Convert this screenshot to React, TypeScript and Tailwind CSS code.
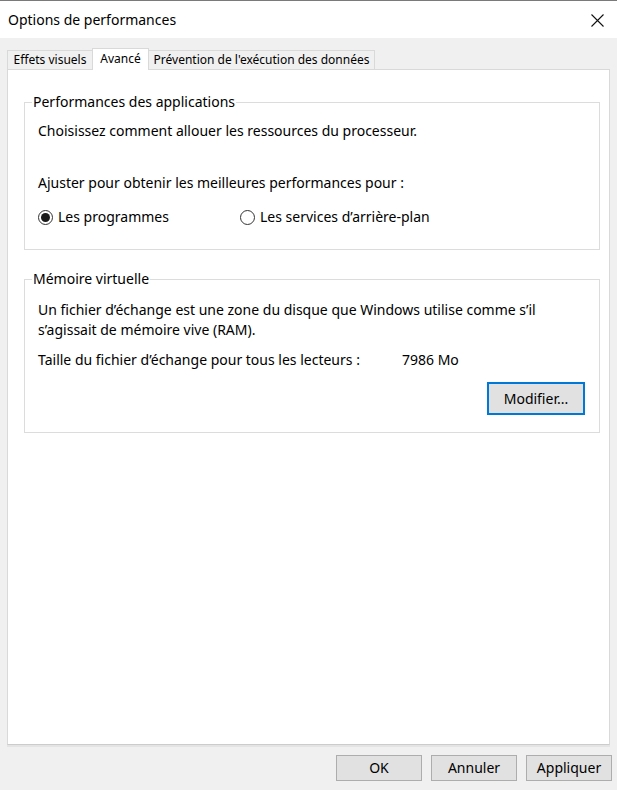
import React from "react";

const font = { fontFamily: '"Noto Sans", "Open Sans", Arial, sans-serif' };

function Radio({ checked, label }: { checked: boolean; label: string }) {
  return (
    <div className="flex items-center gap-[5px]">
      <span className="w-[15px] h-[15px] rounded-full border border-[#333333] bg-white flex items-center justify-center">
        {checked && <span className="w-[9px] h-[9px] rounded-full bg-[#1a1a1a]" />}
      </span>
      <span className="leading-[20px]">{label}</span>
    </div>
  );
}

export default function App() {
  return (
    <div
      className="w-[617px] h-[790px] bg-[#f0f0f0] border-t border-[#7a7a7a] flex flex-col text-[14px] text-black overflow-hidden"
      style={font}
    >
      {/* Title bar */}
      <div className="h-[37px] bg-white flex items-center justify-between pl-[8px] pr-[13px]">
        <span className="text-[14px] leading-[20px]">Options de performances</span>
        <svg width="13" height="13" viewBox="0 0 13 13" className="mt-[1px]">
          <path d="M0.5 0.5 L12.5 12.5 M12.5 0.5 L0.5 12.5" stroke="#111" strokeWidth="1.1" fill="none" />
        </svg>
      </div>

      {/* Tabs */}
      <div className="pt-[10px] pl-[7px] flex items-end h-[32px] -mb-px relative z-10 text-[12px]">
        <div className="w-[85px] h-[20px] border border-r-0 border-[#d9d9d9] bg-[#f0f0f0] flex items-center justify-center leading-[18px]">
          Effets visuels
        </div>
        <div className="w-[57px] h-[22px] border border-b-0 border-[#d9d9d9] bg-white flex items-start justify-center pt-[1px] leading-[18px]">
          Avancé
        </div>
        <div className="w-[226px] h-[20px] border border-l-0 border-[#d9d9d9] bg-[#f0f0f0] flex items-center justify-center leading-[18px]">
          Prévention de l'exécution des données
        </div>
      </div>

      {/* Panel */}
      <div className="mx-[7px] h-[676px] bg-white border border-[#d9d9d9] border-b-[#cccccc] shadow-[0_2px_0_#e4e4e4] pl-[16px]">
        <fieldset className="mt-[22px] w-[576px] border border-[#dcdcdc] pb-[22px]">
          <legend className="ml-[7px] px-[1px] leading-[20px]">Performances des applications</legend>
          <div className="pl-[13px]">
            <div className="pt-[9px] leading-[20px]">Choisissez comment allouer les ressources du processeur.</div>
            <div className="mt-[32px] leading-[20px]">Ajuster pour obtenir les meilleures performances pour :</div>
            <div className="mt-[14px] flex">
              <div className="w-[202px]">
                <Radio checked label="Les programmes" />
              </div>
              <Radio checked={false} label="Les services d’arrière-plan" />
            </div>
          </div>
        </fieldset>

        <fieldset className="mt-[19px] w-[576px] border border-[#dcdcdc] pb-[17px]">
          <legend className="ml-[7px] px-[1px] leading-[20px]">Mémoire virtuelle</legend>
          <div className="pl-[13px]">
            <div className="pt-[11px] leading-[20px]">
              <div className="whitespace-nowrap">Un fichier d’échange est une zone du disque que Windows utilise comme s’il</div>
              <div className="whitespace-nowrap">s’agissait de mémoire vive (RAM).</div>
            </div>
            <div className="mt-[10px] flex leading-[20px]">
              <span className="w-[364px] whitespace-nowrap">Taille du fichier d’échange pour tous les lecteurs :</span>
              <span>7986 Mo</span>
            </div>
            <div className="mt-[12px] flex justify-end pr-[14px]">
              <button className="w-[98px] h-[33px] bg-[#e1e1e1] border-2 border-[#0078d7] leading-[20px]">
                Modifier...
              </button>
            </div>
          </div>
        </fieldset>
      </div>

      {/* Bottom buttons */}
      <div className="mt-[10px] flex justify-end gap-[9px] pr-[5px]">
        <button className="w-[86px] h-[26px] bg-[#e1e1e1] border border-[#adadad] leading-[20px]">OK</button>
        <button className="w-[86px] h-[26px] bg-[#e1e1e1] border border-[#adadad] leading-[20px]">Annuler</button>
        <button className="w-[86px] h-[26px] bg-[#e1e1e1] border border-[#adadad] leading-[20px]">Appliquer</button>
      </div>
    </div>
  );
}
